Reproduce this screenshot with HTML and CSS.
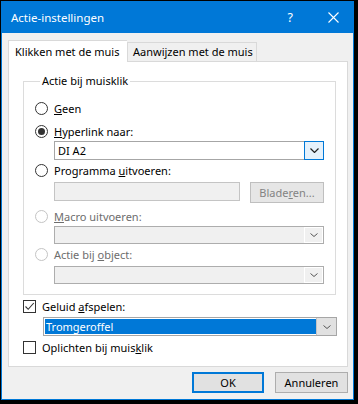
FILE: index.html
```html
<!DOCTYPE html>
<html lang="nl">
<head>
  <meta charset="UTF-8" />
  <title>Actie-instellingen</title>
  <link rel="stylesheet" href="styles.css">
</head>
<body>
  <div class="window">
    <div class="titlebar">
      <span class="title">Actie-instellingen</span>
      <span class="help">?</span>
      <span class="close">
        <svg width="11" height="11" viewBox="0 0 11 11"><path d="M0.5 0.5 L10.5 10.5 M10.5 0.5 L0.5 10.5" stroke="#fff" stroke-width="1.1" fill="none"/></svg>
      </span>
    </div>

    <div class="content">
      <div class="tabs">
        <div class="tab active">Klikken met de muis</div>
        <div class="tab">Aanwijzen met de muis</div>
      </div>

      <div class="panel">
        <fieldset class="group">
          <legend>Actie bij muisklik</legend>

          <div class="opt opt-first"><span class="radio"></span><span><u>G</u>een</span></div>
          <div class="opt opt-gap"><span class="radio checked"></span><span><u>H</u>yperlink naar:</span></div>
          <div class="combo">
            <span class="combo-text">DI A2</span>
            <span class="combo-btn focus"><svg width="9" height="5" viewBox="0 0 9 5"><path d="M0.5 0.5 L4.5 4.5 L8.5 0.5" stroke="#222" stroke-width="1.2" fill="none"/></svg></span>
          </div>
          <div class="opt"><span class="radio"></span><span>Programma <u>u</u>itvoeren:</span></div>
          <div class="file-row">
            <span class="field disabled"></span>
            <span class="btn disabled">Blade<u>r</u>en...</span>
          </div>
          <div class="opt opt-dis disabled"><span class="radio"></span><span><u>M</u>acro uitvoeren:</span></div>
          <div class="combo disabled">
            <span class="combo-text"></span>
            <span class="combo-btn"><svg width="8" height="4" viewBox="0 0 8 4"><path d="M0.5 0.5 L4 3.5 L7.5 0.5" stroke="#555" stroke-width="1" fill="none"/></svg></span>
          </div>
          <div class="opt disabled"><span class="radio"></span><span>Actie bij <u>o</u>bject:</span></div>
          <div class="combo disabled combo-last">
            <span class="combo-text"></span>
            <span class="combo-btn"><svg width="8" height="4" viewBox="0 0 8 4"><path d="M0.5 0.5 L4 3.5 L7.5 0.5" stroke="#555" stroke-width="1" fill="none"/></svg></span>
          </div>
        </fieldset>

        <div class="check-row">
          <span class="check checked"><svg width="11" height="11" viewBox="0 0 11 11"><path d="M1.5 5.5 L4.2 8.3 L9.8 2" stroke="#333" stroke-width="1.1" fill="none"/></svg></span>
          <span>Geluid <u>a</u>fspelen:</span>
        </div>
        <div class="combo sound">
          <span class="combo-text selected">Tromgeroffel</span>
          <span class="combo-btn"><svg width="8" height="4" viewBox="0 0 8 4"><path d="M0.5 0.5 L4 3.5 L7.5 0.5" stroke="#555" stroke-width="1" fill="none"/></svg></span>
        </div>
        <div class="check-row">
          <span class="check"></span>
          <span>Oplichten bij muis<u>k</u>lik</span>
        </div>
      </div>

      <div class="buttons">
        <button class="btn default">OK</button>
        <button class="btn">Annuleren</button>
      </div>
    </div>
  </div>
</body>
</html>
```

FILE: styles.css
```css
* {
  box-sizing: border-box;
  margin: 0;
  padding: 0;
}

html,
body {
  background-color: #000;
}

body {
  font-family: "Noto Sans", "Open Sans", sans-serif;
  font-size: 11px;
  color: #000;
  padding: 1px 4px 4px 1px;
  height: 404px;
  overflow: hidden;
  white-space: nowrap;
}

.window {
  height: 399px;
  border: 1px solid #0078d7;
  background-color: #f0f0f0;
  display: flex;
  flex-direction: column;
}

/* Title bar */
.titlebar {
  height: 31px;
  background-color: #0078d7;
  color: #fff;
  display: flex;
  align-items: center;
  padding-left: 9px;
}

.title {
  flex: 1;
  font-size: 11.5px;
}

.help {
  font-size: 12.5px;
  margin-right: 35px;
}

.close {
  display: flex;
  margin-right: 14px;
}

/* Tabs */
.content {
  padding: 7px 5px 0 6px;
}

.tabs {
  display: flex;
  align-items: flex-end;
  height: 21px;
}

.tab {
  height: 19px;
  line-height: 17px;
  padding-left: 5px;
  width: 130px;
  border: 1px solid #d9d9d9;
  border-bottom: none;
  background-color: #f0f0f0;
}

.tab.active {
  width: 119px;
  height: 23px;
  line-height: 21px;
  padding-left: 6px;
  margin-bottom: -2px;
  background-color: #fff;
  border-right: none;
  position: relative;
  z-index: 1;
}

.panel {
  height: 306px;
  border: 1px solid #d9d9d9;
  background-color: #fff;
  padding: 11px 11px 0 14px;
}

/* Group box */
.group {
  border: 1px solid #dcdcdc;
  padding: 0 11px 10px 11px;
  width: 313px;
}

.group legend {
  line-height: 16px;
  margin-left: 5px;
  padding: 0 2px;
}

.opt {
  display: flex;
  align-items: center;
  height: 20px;
}

.opt-first {
  margin-top: 9px;
}

.opt-gap {
  margin-top: 3px;
}

.opt-dis {
  margin-top: 3px;
}

.radio {
  width: 13px;
  height: 13px;
  border: 1px solid #333;
  border-radius: 50%;
  background-color: #fff;
  margin-right: 6px;
  display: flex;
  align-items: center;
  justify-content: center;
}

.radio.checked::after {
  content: "";
  width: 7px;
  height: 7px;
  border-radius: 50%;
  background-color: #333;
}

.disabled {
  color: #6d6d6d;
}

.disabled .radio {
  border-color: #c4c4c4;
}

/* Combo boxes */
.combo {
  display: flex;
  height: 19px;
  margin-left: 19px;
  border: 1px solid #a6a6a6;
  background-color: #fff;
}

.combo-text {
  flex: 1;
  line-height: 17px;
  padding-left: 3px;
}

.combo-btn {
  width: 20px;
  display: flex;
  align-items: center;
  justify-content: center;
}

.combo-btn.focus {
  border: 1px solid #0078d7;
  background-color: #e5f1fb;
  margin: -1px -1px -1px 0;
  width: 20px;
}

.combo.disabled {
  border-color: #adadad;
  background-color: #f0f0f0;
  height: 18px;
}

.combo.disabled .combo-btn {
  border: 1px solid #fff;
  width: 19px;
}

.combo-last {
  margin-top: 2px;
}

.file-row {
  display: flex;
  margin: 2px 0 0 19px;
}

.field {
  width: 186px;
  height: 19px;
  border: 1px solid #c4c4c4;
  background-color: #f0f0f0;
}

.file-row .btn {
  margin-left: 10px;
  width: 74px;
  height: 21px;
  line-height: 19px;
}

/* Checkboxes */
.check-row {
  display: flex;
  align-items: center;
  height: 20px;
  margin-top: 1px;
}

.check {
  width: 13px;
  height: 13px;
  border: 1px solid #333;
  background-color: #fff;
  margin-right: 6px;
  display: flex;
  align-items: center;
  justify-content: center;
}

.combo.sound {
  margin: 1px 0 0 20px;
  width: 294px;
  border-color: #a6a6a6;
}

.combo-text.selected {
  background-color: #0078d7;
  color: #fff;
  border: 1px solid #fff;
  border-right: none;
  line-height: 15px;
  padding-left: 1px;
}

.sound .combo-btn {
  background-color: #e1e1e1;
  border-left: 1px solid #c4c4c4;
}

/* Buttons */
.btn {
  font-family: inherit;
  font-size: 11px;
  text-align: center;
  display: inline-block;
  background-color: #e1e1e1;
  border: 1px solid #adadad;
  color: #000;
}

.btn.disabled {
  background-color: #e6e6e6;
  border-color: #bfbfbf;
  color: #838383;
}

.buttons {
  display: flex;
  justify-content: flex-end;
  gap: 11px;
  margin-top: 5px;
}

.buttons .btn {
  width: 73px;
  height: 21px;
}

.buttons .btn.default {
  width: 72px;
  border: 2px solid #0078d7;
}
```
